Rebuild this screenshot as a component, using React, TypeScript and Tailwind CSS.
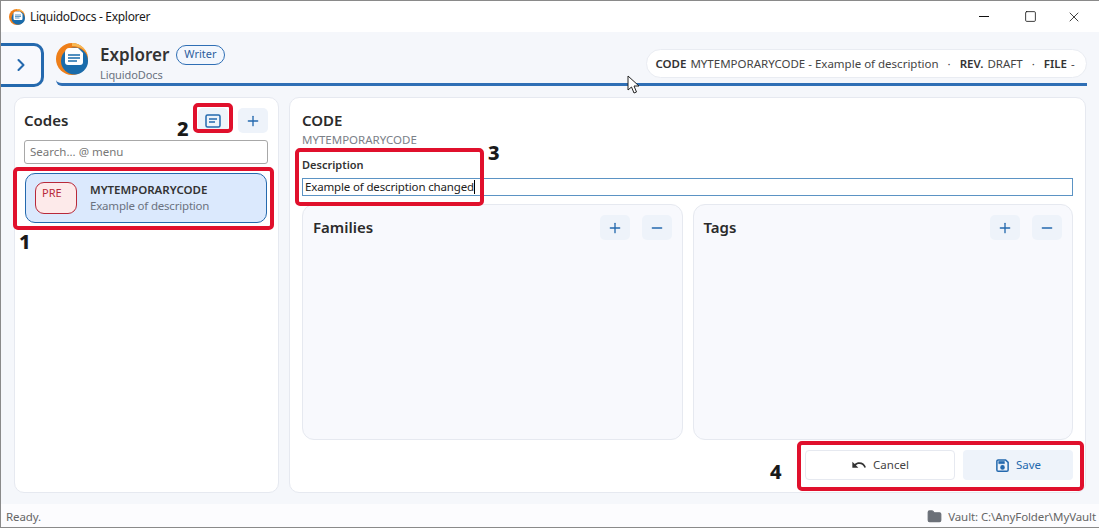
import React from 'react';
import { ChevronRight, Plus, Minus, Folder, X, Square } from 'lucide-react';

const Logo = ({ size }: { size: number }) => (
  <svg width={size} height={size} viewBox="0 0 32 32">
    <circle cx="16" cy="16" r="16" fill="#ee7f1a" />
    <path d="M16 0a16 16 0 0 1 16 16c0-8-7-13-16-13z" fill="#f7b955" />
    <circle cx="18.5" cy="18" r="13.5" fill="#1a6cab" />
    <path d="M13 5h9l5 5v9c0 2-1 3-3 3H12c-2 0-3-1-3-3V9c0-2 2-4 4-4z" fill="#fff" />
    <path d="M12 12h12M12 15h12M12 18h9" stroke="#1a6cab" strokeWidth="1.4" />
  </svg>
);

const SquareBtn = ({ children }: { children: React.ReactNode }) => (
  <button className="w-[30px] h-[25px] rounded-[5px] bg-[#eef3fa] text-[#2469ae] flex items-center justify-center">
    {children}
  </button>
);

const SubPanel = ({ title }: { title: string }) => (
  <div className="flex-1 rounded-[12px] border border-[#e6e9f0] bg-[#f8f9fd] px-[10px] py-[10px]">
    <div className="flex items-center justify-between h-[25px]">
      <span className="text-[15px] font-semibold text-[#2b2b2b]">{title}</span>
      <div className="flex gap-[12px]">
        <SquareBtn><Plus size={16} /></SquareBtn>
        <SquareBtn><Minus size={16} /></SquareBtn>
      </div>
    </div>
  </div>
);

const Callout = ({ className }: { className: string }) => (
  <div className={`absolute border-[4px] border-[#e0102c] rounded-[5px] ${className}`} />
);

const Num = ({ className, children }: { className: string; children: React.ReactNode }) => (
  <div className={`absolute text-[20px] font-extrabold leading-none text-[#1a1a1a] ${className}`}>{children}</div>
);

export default function App() {
  return (
    <div className="relative w-[1099px] h-[528px] flex flex-col overflow-hidden bg-[#f5f7fb] border-l border-[#8a8a8a] border-t border-b text-[#2b2b2b] font-['Noto_Sans',sans-serif]">
      {/* Title bar */}
      <div className="h-[31px] shrink-0 bg-white flex items-center pl-[8px]">
        <Logo size={16} />
        <span className="ml-[5px] text-[12px] tracking-[-0.3px] text-[#1a1a1a]">LiquidoDocs - Explorer</span>
        <div className="ml-auto flex items-center text-[#111]">
          <div className="w-[46px] flex justify-center"><div className="w-[10px] h-px bg-[#111]" /></div>
          <div className="w-[46px] flex justify-center"><Square size={13} strokeWidth={1.5} /></div>
          <div className="w-[46px] flex justify-center pr-[4px]"><X size={16} strokeWidth={1.2} /></div>
        </div>
      </div>

      {/* Header */}
      <div className="h-[55px] shrink-0 flex items-end pr-[12px]">
        <div className="w-[44px] h-[44px] -ml-px mr-[12px] border-[3px] border-l-0 border-[#2469ae] rounded-r-[10px] bg-[#f8f9fd] flex items-center justify-center text-[#2469ae]">
          <ChevronRight size={20} strokeWidth={2.5} />
        </div>
        <div className="flex-1 h-[43px] flex items-start border-b-[3px] border-[#2f6fb5] rounded-bl-[6px] mb-px">
          <Logo size={32} />
          <div className="ml-[12px] -mt-[2px]">
            <div className="flex items-center gap-[7px] h-[27px]">
              <span className="text-[17px] font-semibold text-[#333] leading-none">Explorer</span>
              <span className="h-[20px] px-[7px] rounded-full border border-[#2f6fb5] bg-[#f3f7fd] text-[11px] text-[#2f5f9e] flex items-center">Writer</span>
            </div>
            <div className="text-[11px] leading-[14px] text-[#6b7280] tracking-[-0.1px]">LiquidoDocs</div>
          </div>
          <div className="ml-auto h-[29px] mt-[6px] w-[441px] rounded-full border border-[#e9ecf2] bg-white flex items-center justify-center pr-[3px] text-[11.5px] tracking-[0px] text-[#444] whitespace-nowrap">
            <b className="font-semibold text-[#333]">CODE</b>
            <span className="ml-[4px]">MYTEMPORARYCODE - Example of description</span>
            <span className="mx-[9px]">·</span>
            <b className="font-semibold text-[#333]">REV.</b>
            <span className="ml-[4px]">DRAFT</span>
            <span className="mx-[9px]">·</span>
            <b className="font-semibold text-[#333]">FILE</b>
            <span className="ml-[4px]">-</span>
          </div>
        </div>
      </div>

      {/* Main */}
      <div className="flex-1 min-h-0 flex gap-[10px] pl-[13px] pr-[13px] pt-[10px] pb-[11px]">
        {/* Codes */}
        <div className="w-[265px] shrink-0 rounded-[10px] border border-[#e6e9f0] bg-white pl-[9px] pr-[10px] pt-[10px]">
          <div className="flex items-center justify-between h-[25px]">
            <span className="text-[15px] font-semibold">Codes</span>
            <div className="flex gap-[10px]">
              <SquareBtn>
                <svg width="16" height="14" viewBox="0 0 16 14" fill="none" stroke="currentColor" strokeWidth="1.5">
                  <rect x="1" y="1" width="14" height="12" rx="1.5" />
                  <path d="M4 5h8M4 8h6" />
                </svg>
              </SquareBtn>
              <SquareBtn><Plus size={16} /></SquareBtn>
            </div>
          </div>
          <div className="mt-[7px] h-[24px] rounded-[3px] border border-[#a8a8a8] px-[5px] flex items-center text-[11.5px] text-[#777]">Search... @ menu</div>
          <div className="mt-[9px] mx-px h-[50px] rounded-[10px] border border-[#2469ae] bg-[#dbe9fd] flex items-center pl-[9px]">
            <div className="w-[42px] h-[32px] rounded-[9px] border border-[#b8293a] bg-[#fdeaea] text-[11px] text-[#b8293a] pl-[6px] leading-[20px]">PRE</div>
            <div className="ml-[13px]">
              <div className="text-[11.5px] leading-[16px] font-semibold tracking-[-0.02px] text-[#333]">MYTEMPORARYCODE</div>
              <div className="text-[11.5px] leading-[16px] tracking-[-0.2px] text-[#6b7280]">Example of description</div>
            </div>
          </div>
        </div>

        {/* Code detail */}
        <div className="flex-1 rounded-[10px] border border-[#e6e9f0] bg-white px-[12px] pt-[11px] pb-[12px] flex flex-col">
          <div className="text-[15px] font-semibold leading-[22px]">CODE</div>
          <div className="mt-[2px] text-[11.5px] leading-[14px] tracking-[0px] text-[#7b8088]">MYTEMPORARYCODE</div>
          <div className="mt-[11px] text-[11px] font-semibold leading-[14px] text-[#333]">Description</div>
          <div className="mt-[6px] h-[18px] border border-[#5b93c4] flex items-center pl-[2px] text-[11.5px] tracking-[-0.15px] text-[#222]">
            Example of description changed<span className="w-px h-[14px] bg-black" />
          </div>
          <div className="mt-[8px] flex-1 min-h-0 flex gap-[10px]">
            <SubPanel title="Families" />
            <SubPanel title="Tags" />
          </div>
          <div className="mt-[10px] flex justify-end gap-[8px]">
            <button className="w-[150px] h-[30px] rounded-[4px] border border-[#e6e9f0] bg-white flex items-center justify-center gap-[6px] text-[11.5px] text-[#444]">
              <svg width="16" height="16" viewBox="0 0 24 24" fill="#333">
                <path d="M12.5 8c-2.65 0-5.05.99-6.9 2.6L2 7v9h9l-3.62-3.62c1.39-1.16 3.16-1.88 5.12-1.88 3.54 0 6.55 2.31 7.6 5.5l2.37-.78C21.08 11.03 17.15 8 12.5 8z" />
              </svg>
              Cancel
            </button>
            <button className="w-[110px] h-[30px] rounded-[4px] bg-[#eef3fa] flex items-center justify-center gap-[6px] text-[11.5px] text-[#2469ae]">
              <svg width="15" height="15" viewBox="0 0 24 24" fill="none" stroke="currentColor" strokeWidth="2.4">
                <path d="M17 3H5a2 2 0 0 0-2 2v14a2 2 0 0 0 2 2h14a2 2 0 0 0 2-2V7z" />
                <circle cx="12" cy="15" r="2.5" fill="currentColor" />
                <path d="M6 5.5h9v3.5H6z" fill="currentColor" strokeWidth="1" />
              </svg>
              Save
            </button>
          </div>
        </div>
      </div>

      {/* Status bar */}
      <div className="h-[23px] shrink-0 bg-[#fcfcfe] flex items-center justify-between pl-[5px] pr-[3px] pt-[2px] text-[11.5px] tracking-[-0.1px] text-[#666]">
        <span>Ready.</span>
        <span className="flex items-center gap-[6px]">
          <Folder size={15} fill="#6b7078" stroke="#6b7078" />
          Vault: C:\AnyFolder\MyVault
        </span>
      </div>

      {/* Annotations */}
      <Callout className="left-[12px] top-[166px] w-[261px] h-[63px]" />
      <Callout className="left-[192px] top-[102px] w-[40px] h-[30px]" />
      <Callout className="left-[294px] top-[147px] w-[189px] h-[58px]" />
      <Callout className="left-[796px] top-[440px] w-[287px] h-[50px]" />
      <Num className="left-[18px] top-[231px]">1</Num>
      <Num className="left-[176px] top-[118px]">2</Num>
      <Num className="left-[487px] top-[142px]">3</Num>
      <Num className="left-[769px] top-[461px]">4</Num>

      {/* Mouse cursor */}
      <svg className="absolute left-[626px] top-[74px]" width="14" height="20" viewBox="0 0 14 20">
        <path d="M1 1v14l3.5-3 2.5 6 2.5-1-2.5-6h5z" fill="#fff" stroke="#222" strokeWidth="1" />
      </svg>
    </div>
  );
}
